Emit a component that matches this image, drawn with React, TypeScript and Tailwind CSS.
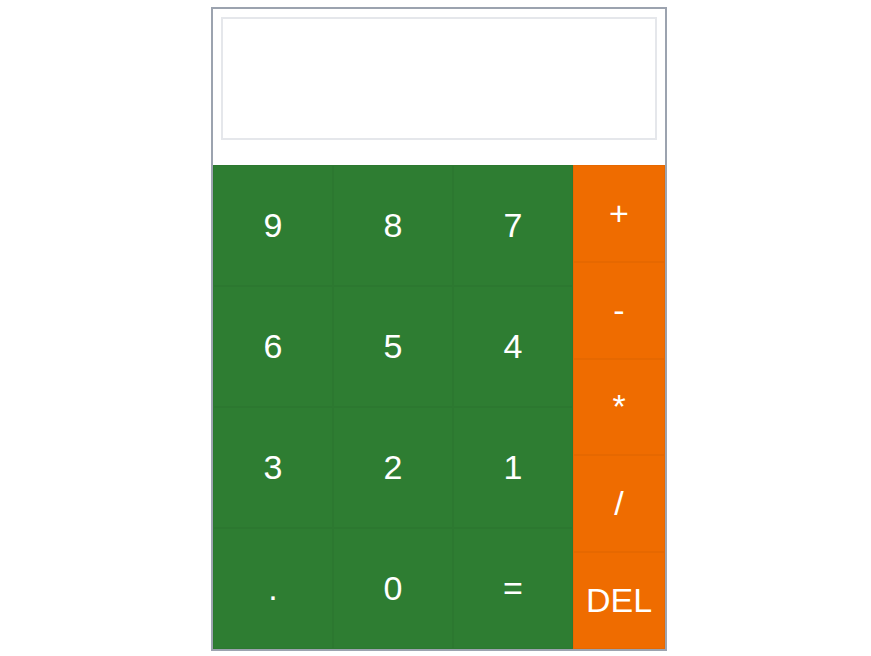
import React from 'react';

export default function App() {
  const digits = ['9', '8', '7', '6', '5', '4', '3', '2', '1', '.', '0', '='];
  const ops = ['+', '-', '*', '/', 'DEL'];

  return (
    <div className="min-h-screen bg-white pt-[7px] pl-[211px]" style={{ fontFamily: '"Liberation Sans", Arial, sans-serif' }}>
      <div className="w-[456px] border-2 border-[#9ca3af] bg-white">
        {/* Display */}
        <div className="h-[156px] px-2 pt-2">
          <div className="h-[123px] w-full border-2 border-[#e5e7eb] bg-white" />
        </div>

        {/* Keypad */}
        <div className="flex">
          <div className="grid w-[360px] grid-cols-3 grid-rows-4 bg-[#2e7d32]">
            {digits.map((d) => (
              <button
                key={d}
                className="flex h-[121px] items-center justify-center border border-black/[0.035] text-[34px] text-white"
              >
                {d}
              </button>
            ))}
          </div>
          <div className="flex flex-1 flex-col bg-[#ef6c00]">
            {ops.map((o) => (
              <button
                key={o}
                className="flex flex-1 items-center justify-center border border-black/[0.035] text-[34px] text-white"
              >
                {o}
              </button>
            ))}
          </div>
        </div>
      </div>
    </div>
  );
}
